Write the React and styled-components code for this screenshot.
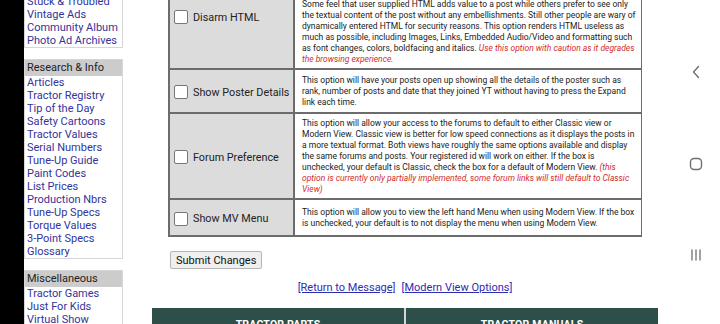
import React from 'react';
import styled, { createGlobalStyle } from 'styled-components';

const Global = createGlobalStyle`
  html, body { margin: 0; padding: 0; background: #000; overflow: hidden; }
  body { font-family: Roboto, "Noto Sans", "Liberation Sans", sans-serif; }
`;

const Screen = styled.div`
  display: flex;
  width: 720px;
  height: 324px;
  overflow: hidden;
  background: #000;
`;

const Cutout = styled.div`
  width: 24px;
  flex: none;
  background: #000;
`;

const Page = styled.div`
  flex: 1;
  background: #fff;
  display: flex;
  align-items: flex-start;
  gap: 29px;
  padding-right: 14px;
  overflow: hidden;
`;

const NavBar = styled.div`
  width: 48px;
  flex: none;
  background: #fff;
  display: flex;
  flex-direction: column;
  align-items: center;
  justify-content: space-between;
  padding: 65px 0 62px;
  box-sizing: border-box;
  color: #707070;
`;

const Sidebar = styled.nav`
  width: 99px;
  flex: none;
  display: flex;
  flex-direction: column;
  gap: 11px;
  margin-top: -6px;
`;

const MenuBox = styled.div`
  border: 1px solid #d6d6d6;
  display: flex;
  flex-direction: column;
`;

const MenuHeader = styled.div`
  background: #cccccc;
  color: #222;
  font-size: 11px;
  line-height: 15px;
  padding: 0 2px 1px;
`;

const MenuLink = styled.a`
  color: #33339c;
  text-decoration: none;
  font-size: 11px;
  line-height: 13px;
  padding-left: 2px;
  white-space: nowrap;
`;

const Main = styled.main`
  flex: 1;
  display: flex;
  flex-direction: column;
  margin-top: -7px;
`;

const OptionsTable = styled.table`
  margin: 0 16px 0 16px;
  border-collapse: collapse;
  table-layout: fixed;
  width: 474px;
`;

const LabelCell = styled.td`
  width: 125px;
  background: #dcdcdc;
  border: 2px solid #6c6c6c;
  padding: ${p => (p.$top ? `${p.$top}px 4px 4px` : '6px 4px 4px')};
  vertical-align: ${p => (p.$top ? 'top' : 'middle')};
  height: ${p => p.$h}px;
  box-sizing: border-box;
`;

const LabelWrap = styled.label`
  display: flex;
  align-items: center;
  gap: 5px;
  font-size: 10.8px;
  color: #222;
  white-space: nowrap;
`;

const Box = styled.span`
  width: 12px;
  height: 12px;
  flex: none;
  border: 1px solid #777;
  border-radius: 2px;
  background: #fff;
`;

const DescCell = styled.td`
  border: 2px solid #6c6c6c;
  border-right-width: 1px;
  padding: 4px 3px 3px 7px;
  font-size: 8.5px;
  line-height: 11px;
  color: #222;
  vertical-align: middle;
`;

const Warn = styled.em`
  color: #d22c2c;
`;

const SubmitButton = styled.button`
  align-self: flex-start;
  margin: 14px 0 0 18px;
  height: 18px;
  padding: 0 5px;
  font-family: inherit;
  font-size: 11px;
  color: #111;
  background: #efefef;
  border: 1px solid #b5b5b5;
  border-radius: 2px;
`;

const LinkRow = styled.div`
  display: flex;
  justify-content: center;
  gap: 6px;
  margin-top: 12px;
  font-size: 11px;
  line-height: 14px;
`;

const BracketLink = styled.a`
  color: #2d2db4;
  text-decoration: underline;
`;

const Footer = styled.div`
  margin-top: 13px;
  display: grid;
  grid-template-columns: 1fr 1fr;
  gap: 2px;
  background: #cfd8d6;
`;

const FooterCell = styled.div`
  background: #2e4f49;
  color: #fff;
  font-weight: bold;
  font-size: 10.5px;
  text-align: center;
  padding: 10px 0 8px;
  letter-spacing: 0.2px;
`;

const sidebar = [
  { title: null, items: ['Stuck & Troubled', 'Vintage Ads', 'Community Album', 'Photo Ad Archives'] },
  {
    title: 'Research & Info',
    items: ['Articles', 'Tractor Registry', 'Tip of the Day', 'Safety Cartoons', 'Tractor Values', 'Serial Numbers', 'Tune-Up Guide', 'Paint Codes', 'List Prices', 'Production Nbrs', 'Tune-Up Specs', 'Torque Values', '3-Point Specs', 'Glossary'],
  },
  { title: 'Miscellaneous', items: ['Tractor Games', 'Just For Kids', 'Virtual Show', 'Museum'] },
];

const rows = [
  {
    label: 'Disarm HTML',
    top: 15,
    h: 72,
    text: 'Some feel that user supplied HTML adds value to a post while others prefer to see only the textual content of the post without any embellishments. Still other people are wary of dynamically entered HTML for security reasons. This option renders HTML useless as much as possible, including Images, Links, Embedded Audio/Video and formatting such as font changes, colors, boldfacing and italics. ',
    warn: 'Use this option with caution as it degrades the browsing experience.',
  },
  {
    label: 'Show Poster Details',
    h: 44,
    text: 'This option will have your posts open up showing all the details of the poster such as rank, number of posts and date that they joined YT without having to press the Expand link each time.',
  },
  {
    label: 'Forum Preference',
    h: 86,
    text: 'This option will allow your access to the forums to default to either Classic view or Modern View. Classic view is better for low speed connections as it displays the posts in a more textual format. Both views have roughly the same options available and display the same forums and posts. Your registered id will work on either. If the box is unchecked, your default is Classic, check the box for a default of Modern View. ',
    warn: '(this option is currently only partially implemented, some forum links will still default to Classic View)',
  },
  {
    label: 'Show MV Menu',
    h: 37,
    text: 'This option will allow you to view the left hand Menu when using Modern View. If the box is unchecked, your default is to not display the menu when using Modern View.',
  },
];

const Back = () => (
  <svg width="10" height="14" viewBox="0 0 10 14" fill="none" stroke="currentColor" strokeWidth="1.4" strokeLinecap="round" strokeLinejoin="round">
    <path d="M7.5 1.5 L2.5 7 L7.5 12.5" />
  </svg>
);
const Home = () => (
  <svg width="14" height="14" viewBox="0 0 14 14" fill="none" stroke="currentColor" strokeWidth="1.4">
    <rect x="1.5" y="1.5" width="11" height="11" rx="3.5" />
  </svg>
);
const Recents = () => (
  <svg width="14" height="14" viewBox="0 0 14 14" fill="none" stroke="currentColor" strokeWidth="1.3" strokeLinecap="round">
    <path d="M3 2 V12 M7 2 V12 M11 2 V12" />
  </svg>
);

export default function App() {
  return (
    <>
      <Global />
      <Screen>
        <Cutout />
        <Page>
          <Sidebar>
            {sidebar.map((g, i) => (
              <MenuBox key={i}>
                {g.title && <MenuHeader>{g.title}</MenuHeader>}
                {g.items.map(it => (
                  <MenuLink key={it} href="#">{it}</MenuLink>
                ))}
              </MenuBox>
            ))}
          </Sidebar>
          <Main>
            <OptionsTable>
              <tbody>
                {rows.map(r => (
                  <tr key={r.label}>
                    <LabelCell $top={r.top} $h={r.h}>
                      <LabelWrap>
                        <Box />
                        {r.label}
                      </LabelWrap>
                    </LabelCell>
                    <DescCell>
                      {r.text}
                      {r.warn && <Warn>{r.warn}</Warn>}
                    </DescCell>
                  </tr>
                ))}
              </tbody>
            </OptionsTable>
            <SubmitButton>Submit Changes</SubmitButton>
            <LinkRow>
              <BracketLink href="#">[Return to Message]</BracketLink>
              <BracketLink href="#">[Modern View Options]</BracketLink>
            </LinkRow>
            <Footer>
              <FooterCell>TRACTOR PARTS</FooterCell>
              <FooterCell>TRACTOR MANUALS</FooterCell>
            </Footer>
          </Main>
        </Page>
        <NavBar>
          <Back />
          <Home />
          <Recents />
        </NavBar>
      </Screen>
    </>
  );
}
